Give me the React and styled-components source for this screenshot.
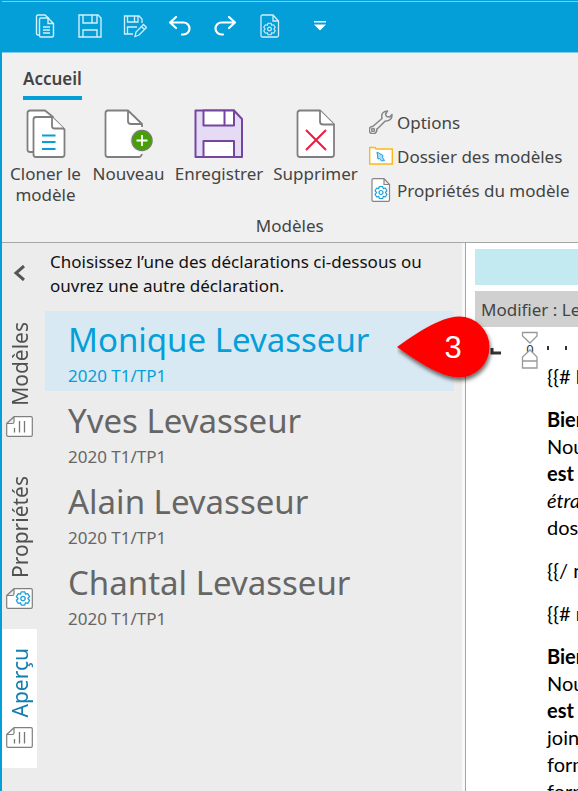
import React, { useState } from 'react';
import styled, { createGlobalStyle } from 'styled-components';

const GlobalStyle = createGlobalStyle`
  * {
    box-sizing: border-box;
  }

  body {
    margin: 0;
    background: #fff;
    font-family: 'Noto Sans', 'Open Sans', sans-serif;
    color: #444;
  }

  button {
    margin: 0;
    padding: 0;
    border: none;
    background: transparent;
    font: inherit;
    color: inherit;
    cursor: pointer;
  }

  svg {
    display: block;
    flex: none;
  }
`;

const Window = styled.div`
  display: flex;
  flex-direction: column;
  height: 100vh;
  overflow: hidden;
  border-left: 2px solid #049fd9;
`;

const TitleBar = styled.header`
  display: flex;
  align-items: center;
  flex: none;
  height: 53px;
  padding: 0 0 2px 20px;
  background: #049fd9;
  border-top: 1px solid #049fd9;
  border-bottom: 1px solid #7fcdec;
  box-shadow: inset 0 1px 0 #7fcdec;
`;

const QuickButton = styled.button`
  display: flex;
  justify-content: center;
  align-items: center;
  width: 45px;
  height: 32px;
  color: ${(props) => (props.$strong ? '#fff' : '#d3effa')};

  &:last-child {
    margin-left: 5px;
  }
`;

const Ribbon = styled.div`
  flex: none;
  height: 190px;
  padding: 13px 8px 0;
  overflow: hidden;
  background: #f0f0f0;
  border-bottom: 1px solid #a6a6a6;
`;

const RibbonTab = styled.button`
  display: block;
  height: 34px;
  margin-left: 13px;
  border-bottom: 4px solid #049fd9;
  font-size: 17px;
  line-height: 26px;
  font-weight: 600;
  padding-bottom: 4px;
`;

const RibbonGroup = styled.section`
  width: max-content;
`;

const GroupBody = styled.div`
  display: flex;
  gap: 12px;
  height: 114px;
  padding-top: 5px;
`;

const GroupTitle = styled.h2`
  margin: 0;
  font-size: 17px;
  line-height: 24px;
  font-weight: 400;
  text-align: center;
`;

const BigButton = styled.button`
  display: flex;
  flex-direction: column;
  align-items: center;
  gap: 4px;
  width: ${(props) => props.$width}px;
  padding-top: 4px;
  font-size: 17px;
  line-height: 21px;
  white-space: nowrap;
`;

const SmallButtons = styled.div`
  display: flex;
  flex-direction: column;
`;

const SmallButton = styled.button`
  display: flex;
  align-items: center;
  gap: 4px;
  height: 34px;
  font-size: 17px;
  white-space: nowrap;
`;

const Content = styled.div`
  display: flex;
  flex: 1;
  min-height: 0;
`;

const SidePanel = styled.aside`
  display: flex;
  flex: 0 0 464px;
  background: #ececec;
  border-right: 1px solid #a6a6a6;
  box-shadow: inset -3px 0 0 #f8f8f8;
`;

const Rail = styled.nav`
  width: 35px;
  flex: none;
`;

const CollapseButton = styled.button`
  display: flex;
  justify-content: center;
  align-items: center;
  width: 35px;
  height: 60px;
`;

const RailTab = styled.button`
  display: flex;
  flex-direction: column;
  align-items: center;
  gap: 10px;
  width: 35px;
  padding: 19px 0 20px;
  background: ${(props) => (props.$active ? '#fff' : 'transparent')};
  color: ${(props) => (props.$active ? '#127fb0' : '#505050')};
`;

const RailLabel = styled.span`
  writing-mode: vertical-rl;
  transform: rotate(180deg);
  font-size: 21px;
  line-height: 26px;
`;

const Returns = styled.div`
  flex: 1;
  padding: 7px 11px 0 8px;
`;

const Intro = styled.p`
  margin: 0 0 13px;
  padding-left: 5px;
  color: #111;
  font-size: 17px;
  line-height: 24px;
`;

const ReturnList = styled.ul`
  margin: 0;
  padding: 0;
  list-style: none;
`;

const ReturnItem = styled.li`
  position: relative;
  height: 81px;
`;

const ReturnButton = styled.button`
  display: block;
  width: 100%;
  height: 80px;
  padding: 0 0 2px 23px;
  text-align: left;
  background: ${(props) => (props.$selected ? '#d9e9f3' : 'transparent')};
  color: ${(props) => (props.$selected ? '#049fd9' : '#666')};
`;

const Name = styled.span`
  display: block;
  font-size: 33px;
  line-height: 50px;
  padding-top: 2px;
  white-space: nowrap;
`;

const Year = styled.span`
  display: block;
  font-size: 17px;
  line-height: 22px;
`;

const Callout = styled.div`
  position: absolute;
  z-index: 1;
  top: 0;
  right: -47px;
`;

const Editor = styled.main`
  flex: 1;
  min-width: 0;
  overflow: hidden;
  padding: 6px 0 0 9px;
  white-space: nowrap;
`;

const Banner = styled.div`
  height: 36px;
  margin-bottom: 6px;
  background: #c3eaf1;
`;

const EditorTitle = styled.h2`
  height: 36px;
  margin: 0;
  padding-left: 6px;
  background: #d0d0d0;
  font-size: 17px;
  line-height: 38px;
  font-weight: 400;
`;

const Ruler = styled.div`
  height: 36px;
`;

const Page = styled.article`
  padding-left: 72px;
  font-family: Lato, sans-serif;
  font-size: 20px;
  line-height: 27px;
  color: #000;

  p {
    margin: 0 0 16px;
  }
`;

const docOutline = 'M2 4 Q2 2 4 2 H24 L38 16 V46 Q38 48 36 48 H4 Q2 48 2 46 Z';
const gearOutline =
  'M-1.6 -6 H1.6 L2.3 -3.9 L4.3 -4.5 L6 -1.8 L4.5 0 L6 1.8 L4.3 4.5 L2.3 3.9 L1.6 6 H-1.6 L-2.3 3.9 L-4.3 4.5 L-6 1.8 L-4.5 0 L-6 -1.8 L-4.3 -4.5 L-2.3 -3.9 Z';

const Gear = ({ x, y, scale = 1, color = '#1b9fdb' }) => (
  <g transform={`translate(${x} ${y}) scale(${scale})`} fill="none" stroke={color} strokeWidth="1.2" strokeLinejoin="round">
    <path d={gearOutline} />
    <circle r="2" />
  </g>
);

const QuickCopyIcon = () => (
  <svg width="20" height="24" viewBox="0 0 20 24" fill="none" stroke="currentColor" strokeWidth="1.4">
    <path d="M4.5 21 H3 Q1.5 21 1.5 19.5 V2.5 Q1.5 1 3 1 H10 L14 4.5" />
    <path d="M4.5 5.5 Q4.5 4 6 4 H13 L18.5 9.5 V21.5 Q18.5 23 17 23 H6 Q4.5 23 4.5 21.5 Z M13 4 V9.5 H18.5" />
    <path d="M8 13 H15 M8 16 H15 M8 19 H15" />
  </svg>
);

const QuickSaveIcon = () => (
  <svg width="24" height="24" viewBox="0 0 24 24" fill="none" stroke="currentColor" strokeWidth="1.4">
    <path d="M1 1 H20 L23 4 V23 H1 Z M5 1 V9 H19 V1 M14 1 V9 M5 23 V16 H19 V23" />
  </svg>
);

const QuickSaveAsIcon = () => (
  <svg width="24" height="24" viewBox="0 0 24 24" fill="none" stroke="currentColor" strokeWidth="1.3">
    <path d="M10 20 H1.5 V2 H16 L19 5 V9 M4.5 2 V8 H15 V2 M11.5 2 V8 M4.5 20 V13 H14" />
    <path d="M12 22.5 L13 18 L20.5 10.5 L23.5 13.5 L16 21 Z M18.5 12.5 L21.5 15.5" />
  </svg>
);

const UndoIcon = () => (
  <svg width="24" height="24" viewBox="0 0 24 24" fill="none" stroke="currentColor" strokeWidth="2.2" strokeLinecap="round" strokeLinejoin="round">
    <path d="M8 3 L2 8.5 L8 14 M2 8.5 H15.5 A6 6 0 0 1 15.5 20.5 H14" />
  </svg>
);

const RedoIcon = () => (
  <svg width="24" height="24" viewBox="0 0 24 24" fill="none" stroke="currentColor" strokeWidth="2.2" strokeLinecap="round" strokeLinejoin="round">
    <path d="M16 3 L22 8.5 L16 14 M22 8.5 H8.5 A6 6 0 0 0 8.5 20.5 H10" />
  </svg>
);

const QuickPropertiesIcon = () => (
  <svg width="20" height="24" viewBox="0 0 20 24" fill="none" stroke="currentColor" strokeWidth="1.3">
    <path d="M1 2.5 Q1 1 2.5 1 H13 L18.5 7 V21.5 Q18.5 23 17 23 H2.5 Q1 23 1 21.5 Z M13 1 V7 H18.5" />
    <Gear x={9.5} y={15} scale={0.95} color="currentColor" />
  </svg>
);

const CustomizeIcon = () => (
  <svg width="14" height="10" viewBox="0 0 14 10" fill="currentColor">
    <path d="M1 0 H13 V1.5 H1 Z M1 3.5 H13 L7 9.5 Z" />
  </svg>
);

const CloneIcon = () => (
  <svg width="40" height="50" viewBox="0 0 40 50" fill="#fff" stroke="#7f7f7f" strokeWidth="1.8" strokeLinejoin="round">
    <path d="M8 43 H4 Q1.5 43 1.5 40.5 V4 Q1.5 1.5 4 1.5 H19 L27 8 V43 Z" />
    <path d="M7.5 10.5 Q7.5 8 10 8 H26 L38.5 20.5 V45.5 Q38.5 48 36 48 H10 Q7.5 48 7.5 45.5 Z" />
    <path d="M26 8 V17 Q26 19.5 28.5 19.5 H38" />
    <path d="M16 26.5 H29.5 M16 33 H29.5 M16 40 H29.5" stroke="#049fd9" strokeWidth="2" />
  </svg>
);

const NewIcon = () => (
  <svg width="50" height="50" viewBox="0 0 50 50">
    <path d={docOutline} fill="#fff" />
    <path
      d="M38 18 V15 L24 1.5 H4 Q1.5 1.5 1.5 4 V45.5 Q1.5 48 4 48 H35 Q37 48 38 45 M24 1.5 V12 Q24 15 27 15 H38"
      fill="none"
      stroke="#7f7f7f"
      strokeWidth="1.8"
      strokeLinejoin="round"
    />
    <circle cx="38" cy="31.5" r="12" fill="#f0f0f0" />
    <circle cx="38" cy="31.5" r="10" fill="#479f06" stroke="#6f7f66" strokeWidth="1.5" />
    <path d="M38 26 V37 M32.5 31.5 H43.5" stroke="#fff" strokeWidth="1.8" />
  </svg>
);

const SaveIcon = () => (
  <svg width="50" height="50" viewBox="0 0 50 50" stroke="#7446a0" strokeWidth="2" strokeLinejoin="round">
    <path d="M1.5 1.5 H40 L48 10 V48 H1.5 Z" fill="#e5dbf5" />
    <path d="M9.5 1.5 H40 V16.5 H9.5 Z M30.5 1.5 V16.5 M9.5 48 V32 H40 V48 Z" fill="#fff" />
  </svg>
);

const DeleteIcon = () => (
  <svg width="40" height="50" viewBox="0 0 40 50" fill="#fff" stroke="#7f7f7f" strokeWidth="1.8" strokeLinejoin="round">
    <path d="M1.5 4 Q1.5 1.5 4 1.5 H24 L38 15.5 V45.5 Q38 48 35.5 48 H4 Q1.5 48 1.5 45.5 Z" />
    <path d="M24 1.5 V12.5 Q24 15.5 27 15.5 H38" />
    <path d="M10 21 L30 41 M30 21 L10 41" stroke="#e91c3d" strokeWidth="2" />
  </svg>
);

const WrenchIcon = () => (
  <svg width="24" height="24" viewBox="0 0 24 24" fill="none" stroke="#858585" strokeWidth="1.5" strokeLinejoin="round">
    <path d="M7.5 18.5 A3.8 3.8 0 1 1 4 16.2 L13 8.5 Q11.5 1.5 18.5 1 L16.5 4 L17.5 6.5 L20.5 7 L23 4.5 Q23.5 10.500 16 11.2 L7.7 19.5" />
    <circle cx="4" cy="20" r="1.5" />
  </svg>
);

const FolderIcon = () => (
  <svg width="24" height="24" viewBox="0 0 24 24">
    <path d="M0.7 20 V3.5 H6 L7 5 H23.3 V20 Z" fill="#fff" stroke="#fcb814" strokeWidth="1.4" />
    <path d="M8 8 L14 11.5 L13.5 13.5 L15.5 16.5 L12.5 17 L10.5 14.5 L9 15 Z" fill="#a5def5" stroke="#1b9fdb" strokeWidth="1" />
  </svg>
);

const PropertiesIcon = () => (
  <svg width="24" height="24" viewBox="0 0 24 24">
    <path
      d="M3 2 Q3 0.7 4.3 0.7 H15 L20.5 6.5 V22 Q20.5 23.3 19.2 23.3 H4.3 Q3 23.3 3 22 Z M15 0.7 V6.5 H20.5"
      fill="#fff"
      stroke="#858585"
      strokeWidth="1.2"
    />
    <Gear x={12} y={14.5} />
  </svg>
);

const SidePageIcon = ({ gear }) => (
  <svg width="27" height="21" viewBox="0 0 27 21">
    <path
      d="M0.7 7.5 L8 0.7 H25 Q26.3 0.7 26.3 2 V19 Q26.3 20.3 25 20.3 H2 Q0.7 20.3 0.7 19 Z M0.7 7.5 H6.5 Q8 7.5 8 6 V0.7"
      fill="#fff"
      stroke="#7f7f7f"
      strokeWidth="1.2"
    />
    {gear ? (
      <Gear x={17} y={10.5} scale={1.1} />
    ) : (
      <path d="M8.5 12 V16.5 M13.5 5 V16.5 M18.5 5 V16.5" stroke="#777" strokeWidth="1.3" />
    )}
  </svg>
);

const ChevronIcon = () => (
  <svg width="14" height="16" viewBox="0 0 14 16" fill="none" stroke="#555" strokeWidth="3">
    <path d="M11 1 L3 8 L11 15" />
  </svg>
);

const CalloutShape = () => (
  <svg width="104" height="76" viewBox="0 0 104 76" role="img" aria-label="3">
    <defs>
      <filter id="drop" x="-10%" y="-10%" width="130%" height="130%">
        <feDropShadow dx="1" dy="3" stdDeviation="2" floodOpacity="0.6" />
      </filter>
    </defs>
    <path d="M0 36 C17 24 42 6 62 5.5 A30.500 30.500 0 0 1 62 66.500 C42 66 17 48 0 36 Z" fill="#fe0000" filter="url(#drop)" />
    <text x="56" y="47" textAnchor="middle" fontFamily="Liberation Sans" fontSize="31" fill="#fff">
      3
    </text>
  </svg>
);

const RulerMarks = () => (
  <svg width="103" height="44" viewBox="0 0 103 44">
    <path d="M17 21 V26 H26" fill="none" stroke="#333" strokeWidth="3" />
    <text x="55" y="27" textAnchor="middle" fontFamily="Noto Sans" fontSize="13" fill="#333">
      0
    </text>
    <g fill="#fff" stroke="#999" strokeWidth="1.3">
      <path d="M47.5 5.5 H62 V9 L55 16 L47.5 9 Z" />
      <path d="M47.5 34 V30 L55 23 L62 30 V41 H47.5 Z M47.5 34 H62" />
    </g>
    <path d="M73 19 V23 M91 19 V23" stroke="#333" strokeWidth="2" />
  </svg>
);

const railTabs = [
  { label: 'Modèles' },
  { label: 'Propriétés', gear: true },
  { label: 'Aperçu' },
];

const people = ['Monique Levasseur', 'Yves Levasseur', 'Alain Levasseur', 'Chantal Levasseur'];

const App = () => {
  const [activeTab, setActiveTab] = useState('Aperçu');
  const [selected, setSelected] = useState(people[0]);

  return (
    <>
      <GlobalStyle />
      <Window>
        <TitleBar>
          <QuickButton aria-label="Cloner"><QuickCopyIcon /></QuickButton>
          <QuickButton aria-label="Enregistrer"><QuickSaveIcon /></QuickButton>
          <QuickButton aria-label="Enregistrer sous"><QuickSaveAsIcon /></QuickButton>
          <QuickButton aria-label="Annuler" $strong><UndoIcon /></QuickButton>
          <QuickButton aria-label="Rétablir" $strong><RedoIcon /></QuickButton>
          <QuickButton aria-label="Propriétés"><QuickPropertiesIcon /></QuickButton>
          <QuickButton aria-label="Personnaliser" $strong><CustomizeIcon /></QuickButton>
        </TitleBar>

        <Ribbon>
          <RibbonTab>Accueil</RibbonTab>
          <RibbonGroup>
            <GroupBody>
              <BigButton $width={71}>
                <CloneIcon />
                <span>Cloner le<br />modèle</span>
              </BigButton>
              <BigButton $width={71}>
                <NewIcon />
                Nouveau
              </BigButton>
              <BigButton $width={86}>
                <SaveIcon />
                Enregistrer
              </BigButton>
              <BigButton $width={83}>
                <DeleteIcon />
                Supprimer
              </BigButton>
              <SmallButtons>
                <SmallButton><WrenchIcon />Options</SmallButton>
                <SmallButton><FolderIcon />Dossier des modèles</SmallButton>
                <SmallButton><PropertiesIcon />Propriétés du modèle</SmallButton>
              </SmallButtons>
            </GroupBody>
            <GroupTitle>Modèles</GroupTitle>
          </RibbonGroup>
        </Ribbon>

        <Content>
          <SidePanel>
            <Rail>
              <CollapseButton aria-label="Réduire"><ChevronIcon /></CollapseButton>
              {railTabs.map(({ label, gear }) => (
                <RailTab key={label} $active={label === activeTab} onClick={() => setActiveTab(label)}>
                  <RailLabel>{label}</RailLabel>
                  <SidePageIcon gear={gear} />
                </RailTab>
              ))}
            </Rail>
            <Returns>
              <Intro>Choisissez l’une des déclarations ci-dessous ou ouvrez une autre déclaration.</Intro>
              <ReturnList>
                {people.map((name) => (
                  <ReturnItem key={name}>
                    <ReturnButton $selected={name === selected} onClick={() => setSelected(name)}>
                      <Name>{name}</Name>
                      <Year>2020 T1/TP1</Year>
                    </ReturnButton>
                    {name === people[0] && <Callout><CalloutShape /></Callout>}
                  </ReturnItem>
                ))}
              </ReturnList>
            </Returns>
          </SidePanel>

          <Editor>
            <Banner />
            <EditorTitle>Modifier : Le</EditorTitle>
            <Ruler><RulerMarks /></Ruler>
            <Page>
              <p>{'{{# l'}</p>
              <p>
                <b>Bien</b><br />
                Nou<br />
                <b>est</b><br />
                <i>étra</i><br />
                dos<br />
              </p>
              <p>{'{{/ n'}</p>
              <p>{'{{# n'}</p>
              <p>
                <b>Bien</b><br />
                Nou<br />
                <b>est</b><br />
                join<br />
                form<br />
                form
              </p>
            </Page>
          </Editor>
        </Content>
      </Window>
    </>
  );
};

export default App;
